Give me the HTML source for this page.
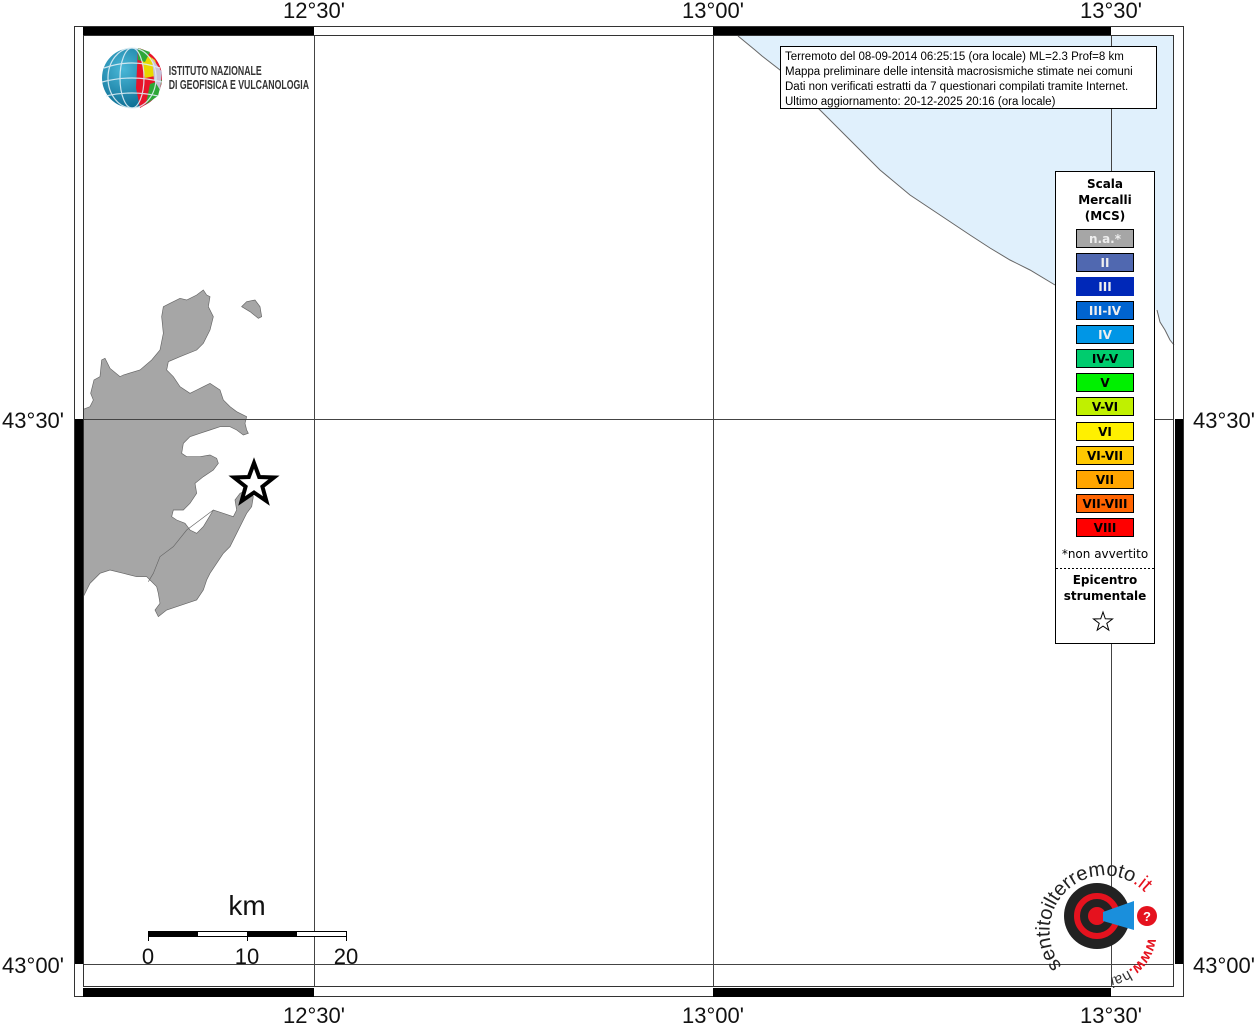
<!DOCTYPE html>
<html><head><meta charset="utf-8"><style>
html,body{margin:0;padding:0;background:#fff;}
svg{display:block;font-family:"Liberation Sans",sans-serif;}
</style></head><body>
<svg width="1257" height="1024" viewBox="0 0 1257 1024" xmlns="http://www.w3.org/2000/svg">
<polygon points="738,36 755,50 762,56 780,70 800,90 825,115 850,140 880,170 910,195 940,215 970,235 990,248 1010,260 1030,270 1055,285 1100,300 1157,310 1160,322 1165,330 1170,340 1174,345 1174,36" fill="#e0f0fc"/>
<polyline points="738,36 755,50 762,56 780,70 800,90 825,115 850,140 880,170 910,195 940,215 970,235 990,248 1010,260 1030,270 1055,285" fill="none" stroke="#666" stroke-width="1"/>
<polyline points="1157,310 1160,322 1165,330 1170,340 1174,345" fill="none" stroke="#666" stroke-width="1"/>
<g transform="translate(70,280) scale(0.33333)" fill="#a6a6a6" stroke="#666" stroke-width="2">
<polygon points="40,388 60,380 70,360 62,340 72,300 90,290 95,240 105,235 120,265 150,290 160,285 210,270 245,240 270,210 280,160 275,110 280,80 300,70 330,55 350,60 380,45 400,30 410,45 420,50 415,80 430,110 420,150 400,190 380,210 330,230 295,245 290,270 310,290 330,320 360,340 380,330 400,320 420,310 450,330 460,360 480,380 500,395 530,410 525,430 530,450 535,460 520,465 500,450 480,440 450,440 420,450 390,460 360,470 340,490 335,520 350,530 390,530 420,525 440,535 445,550 430,570 400,590 375,610 380,640 360,670 340,690 310,690 305,710 320,720 345,730 360,750 380,760 400,740 430,690 460,700 490,710 500,690 495,660 510,640 530,630 550,650 545,680 530,700 520,720 500,760 480,800 460,820 440,850 420,880 410,900 400,930 380,960 350,970 320,980 290,990 265,1010 255,990 270,970 265,940 260,920 240,900 230,890 200,890 160,880 120,870 90,880 60,910 50,930 40,950"/>
<polygon points="515,80 530,65 555,60 570,80 575,110 565,115 540,95"/>
<polyline points="430,690 350,750 310,800 270,830 250,880 235,905" fill="none"/>
</g>
<g stroke="#444" stroke-width="1" fill="none">
<line x1="314.5" y1="35" x2="314.5" y2="987"/>
<line x1="713.5" y1="35" x2="713.5" y2="987"/>
<line x1="1111.5" y1="35" x2="1111.5" y2="987"/>
<line x1="83" y1="419.5" x2="1174" y2="419.5"/>
<line x1="83" y1="964.5" x2="1174" y2="964.5"/>
</g>
<rect x="74.5" y="26.5" width="1109" height="970" fill="none" stroke="#333"/>
<rect x="83.5" y="35.5" width="1090" height="951" fill="none" stroke="#333"/>
<rect x="83" y="27" width="231" height="8" fill="#000"/>
<rect x="713" y="27" width="398" height="8" fill="#000"/>
<rect x="83" y="988" width="231" height="9" fill="#000"/>
<rect x="713" y="988" width="398" height="9" fill="#000"/>
<rect x="75" y="419" width="8" height="545" fill="#000"/>
<rect x="1175" y="419" width="8" height="545" fill="#000"/>
<g font-size="22" fill="#111" text-anchor="middle">
<text x="314" y="18">12°30'</text><text x="713" y="18">13°00'</text><text x="1111" y="18">13°30'</text>
<text x="314" y="1023">12°30'</text><text x="713" y="1023">13°00'</text><text x="1111" y="1023">13°30'</text>
</g>
<g font-size="22" fill="#111">
<text x="64" y="428" text-anchor="end">43°30'</text><text x="64" y="973" text-anchor="end">43°00'</text>
<text x="1193" y="428">43°30'</text><text x="1193" y="973">43°00'</text>
</g>
<polygon points="254,463 259.2,477 274,477.5 262.4,486.6 266.4,501 254,492.5 241.6,501 245.6,486.6 234,477.5 248.8,477" fill="#fff" stroke="#000" stroke-width="4"/>
<rect x="780.5" y="46.5" width="376" height="62" fill="#fff" stroke="#000"/>
<g font-size="11.5" fill="#000">
<text x="785" y="60">Terremoto del 08-09-2014 06:25:15 (ora locale) ML=2.3 Prof=8 km</text>
<text x="785" y="75">Mappa preliminare delle intensità macrosismiche stimate nei comuni</text>
<text x="785" y="90">Dati non verificati estratti da 7 questionari compilati tramite Internet.</text>
<text x="785" y="105">Ultimo aggiornamento: 20-12-2025 20:16 (ora locale)</text>
</g>
<rect x="1055.5" y="171.5" width="99" height="472" fill="#fff" stroke="#000"/>
<g font-family="DejaVu Sans, sans-serif" font-weight="bold" font-size="12" text-anchor="middle" fill="#000">
<text x="1105" y="188">Scala</text><text x="1105" y="204">Mercalli</text><text x="1105" y="220">(MCS)</text>
</g>
<g font-family="DejaVu Sans, sans-serif" font-weight="bold" font-size="12" text-anchor="middle" stroke="#000">
<rect x="1076.5" y="229.5" width="57" height="18" fill="#a6a6a6"/>
<rect x="1076.5" y="253.5" width="57" height="18" fill="#5068b0"/>
<rect x="1076.5" y="277.5" width="57" height="18" fill="#0028b8" stroke="#0028b8"/>
<rect x="1076.5" y="301.5" width="57" height="18" fill="#0064d0"/>
<rect x="1076.5" y="325.5" width="57" height="18" fill="#0096e6"/>
<rect x="1076.5" y="349.5" width="57" height="18" fill="#00cc6e"/>
<rect x="1076.5" y="373.5" width="57" height="18" fill="#00f000"/>
<rect x="1076.5" y="397.5" width="57" height="18" fill="#c0f000"/>
<rect x="1076.5" y="422.5" width="57" height="18" fill="#fff000"/>
<rect x="1076.5" y="446.5" width="57" height="18" fill="#ffc800"/>
<rect x="1076.5" y="470.5" width="57" height="18" fill="#ffa500"/>
<rect x="1076.5" y="494.5" width="57" height="18" fill="#ff6400"/>
<rect x="1076.5" y="518.5" width="57" height="18" fill="#ff0000"/>
<g stroke="none">
<text x="1105" y="243" fill="#eee">n.a.*</text>
<text x="1105" y="267" fill="#eee">II</text>
<text x="1105" y="291" fill="#eee">III</text>
<text x="1105" y="315" fill="#eee">III-IV</text>
<text x="1105" y="339" fill="#eee">IV</text>
<text x="1105" y="363" fill="#000">IV-V</text>
<text x="1105" y="387" fill="#000">V</text>
<text x="1105" y="411" fill="#000">V-VI</text>
<text x="1105" y="436" fill="#000">VI</text>
<text x="1105" y="460" fill="#000">VI-VII</text>
<text x="1105" y="484" fill="#000">VII</text>
<text x="1105" y="508" fill="#000">VII-VIII</text>
<text x="1105" y="532" fill="#000">VIII</text>
</g>
</g>
<text x="1105" y="558" font-family="DejaVu Sans, sans-serif" font-size="12" text-anchor="middle" fill="#000">*non avvertito</text>
<line x1="1056" y1="568.5" x2="1154" y2="568.5" stroke="#000" stroke-dasharray="2,2"/>
<g font-family="DejaVu Sans, sans-serif" font-weight="bold" font-size="12" text-anchor="middle" fill="#000">
<text x="1105" y="584">Epicentro</text><text x="1105" y="600">strumentale</text>
</g>
<polygon points="1103,612 1105.3,618.8 1112.5,619 1106.8,623.3 1108.8,630.2 1103,626.1 1097.2,630.2 1099.2,623.3 1093.5,619 1100.7,618.8" fill="#fff" stroke="#000" stroke-width="1"/>
<text x="247" y="915" font-size="28" text-anchor="middle" fill="#111">km</text>
<rect x="148.5" y="931.5" width="198" height="5" fill="#fff" stroke="#000"/>
<rect x="148" y="931" width="50" height="6" fill="#000"/>
<rect x="247" y="931" width="50" height="6" fill="#000"/>
<line x1="148.5" y1="931" x2="148.5" y2="941" stroke="#000"/>
<line x1="247.5" y1="931" x2="247.5" y2="941" stroke="#000"/>
<line x1="346.5" y1="931" x2="346.5" y2="941" stroke="#000"/>
<g font-size="22" fill="#111" text-anchor="middle">
<text x="148" y="964">0</text><text x="247" y="964">10</text><text x="346" y="964">20</text>
</g>
<defs>
<radialGradient id="gb" cx="0.35" cy="0.35" r="0.7"><stop offset="0" stop-color="#4ab8d8"/><stop offset="1" stop-color="#0a6a90"/></radialGradient>
</defs>
<circle cx="132" cy="78" r="30" fill="url(#gb)"/>
<path d="M138,48 A30,30 0 0 1 162,78 A30,30 0 0 1 150,102 L140,108 L136,88 Z" fill="#e8132a"/>
<path d="M140,50 L155,60 L160,75 L145,78 Z" fill="#e8d800"/>
<path d="M138,48 L150,52 L145,62 L138,60 Z" fill="#2da838"/>
<path d="M150,84 L162,80 L158,96 L146,104 Z" fill="#2da838"/>
<path d="M152,58 L162,72 L160,90 L154,80 Z" fill="#c8c0d8"/>
<g stroke="#dfeef5" stroke-width="1.2" fill="none" opacity="0.9">
<ellipse cx="132" cy="78" rx="12" ry="30"/><ellipse cx="132" cy="78" rx="24" ry="30"/>
<path d="M104,68 Q132,58 160,68"/><path d="M102,82 Q132,74 162,82"/><path d="M106,96 Q132,90 158,96"/>
</g>
<g font-size="12.5" font-weight="bold" fill="#333" transform="scale(0.7,1)">
<text x="241" y="75">ISTITUTO NAZIONALE</text><text x="241" y="89">DI GEOFISICA E VULCANOLOGIA</text>
</g>
<circle cx="1097" cy="916" r="33" fill="#222"/>
<circle cx="1097" cy="916" r="20" fill="none" stroke="#e5121e" stroke-width="6"/>
<circle cx="1097" cy="916" r="9" fill="#e5121e"/>
<polygon points="1103,912 1134,901 1134,930 1103,921" fill="#1a8fdc"/>
<circle cx="1147" cy="916" r="10" fill="#e5121e"/>
<text x="1147" y="921" font-size="13" font-weight="bold" fill="#fff" text-anchor="middle">?</text>
<defs><path id="arc" d="M1062,966 A48,48 0 1 1 1148,896"/><path id="arc2" d="M1148,938 A46,46 0 0 1 1060,950"/></defs>
<text font-size="20" fill="#222"><textPath href="#arc">sentitoilterremoto<tspan fill="#e5121e">.it</tspan></textPath></text>
<text font-size="15" fill="#e5121e" font-weight="bold"><textPath href="#arc2">www.<tspan fill="#333" font-weight="normal">hai</tspan></textPath></text>
</svg>
</body></html>
